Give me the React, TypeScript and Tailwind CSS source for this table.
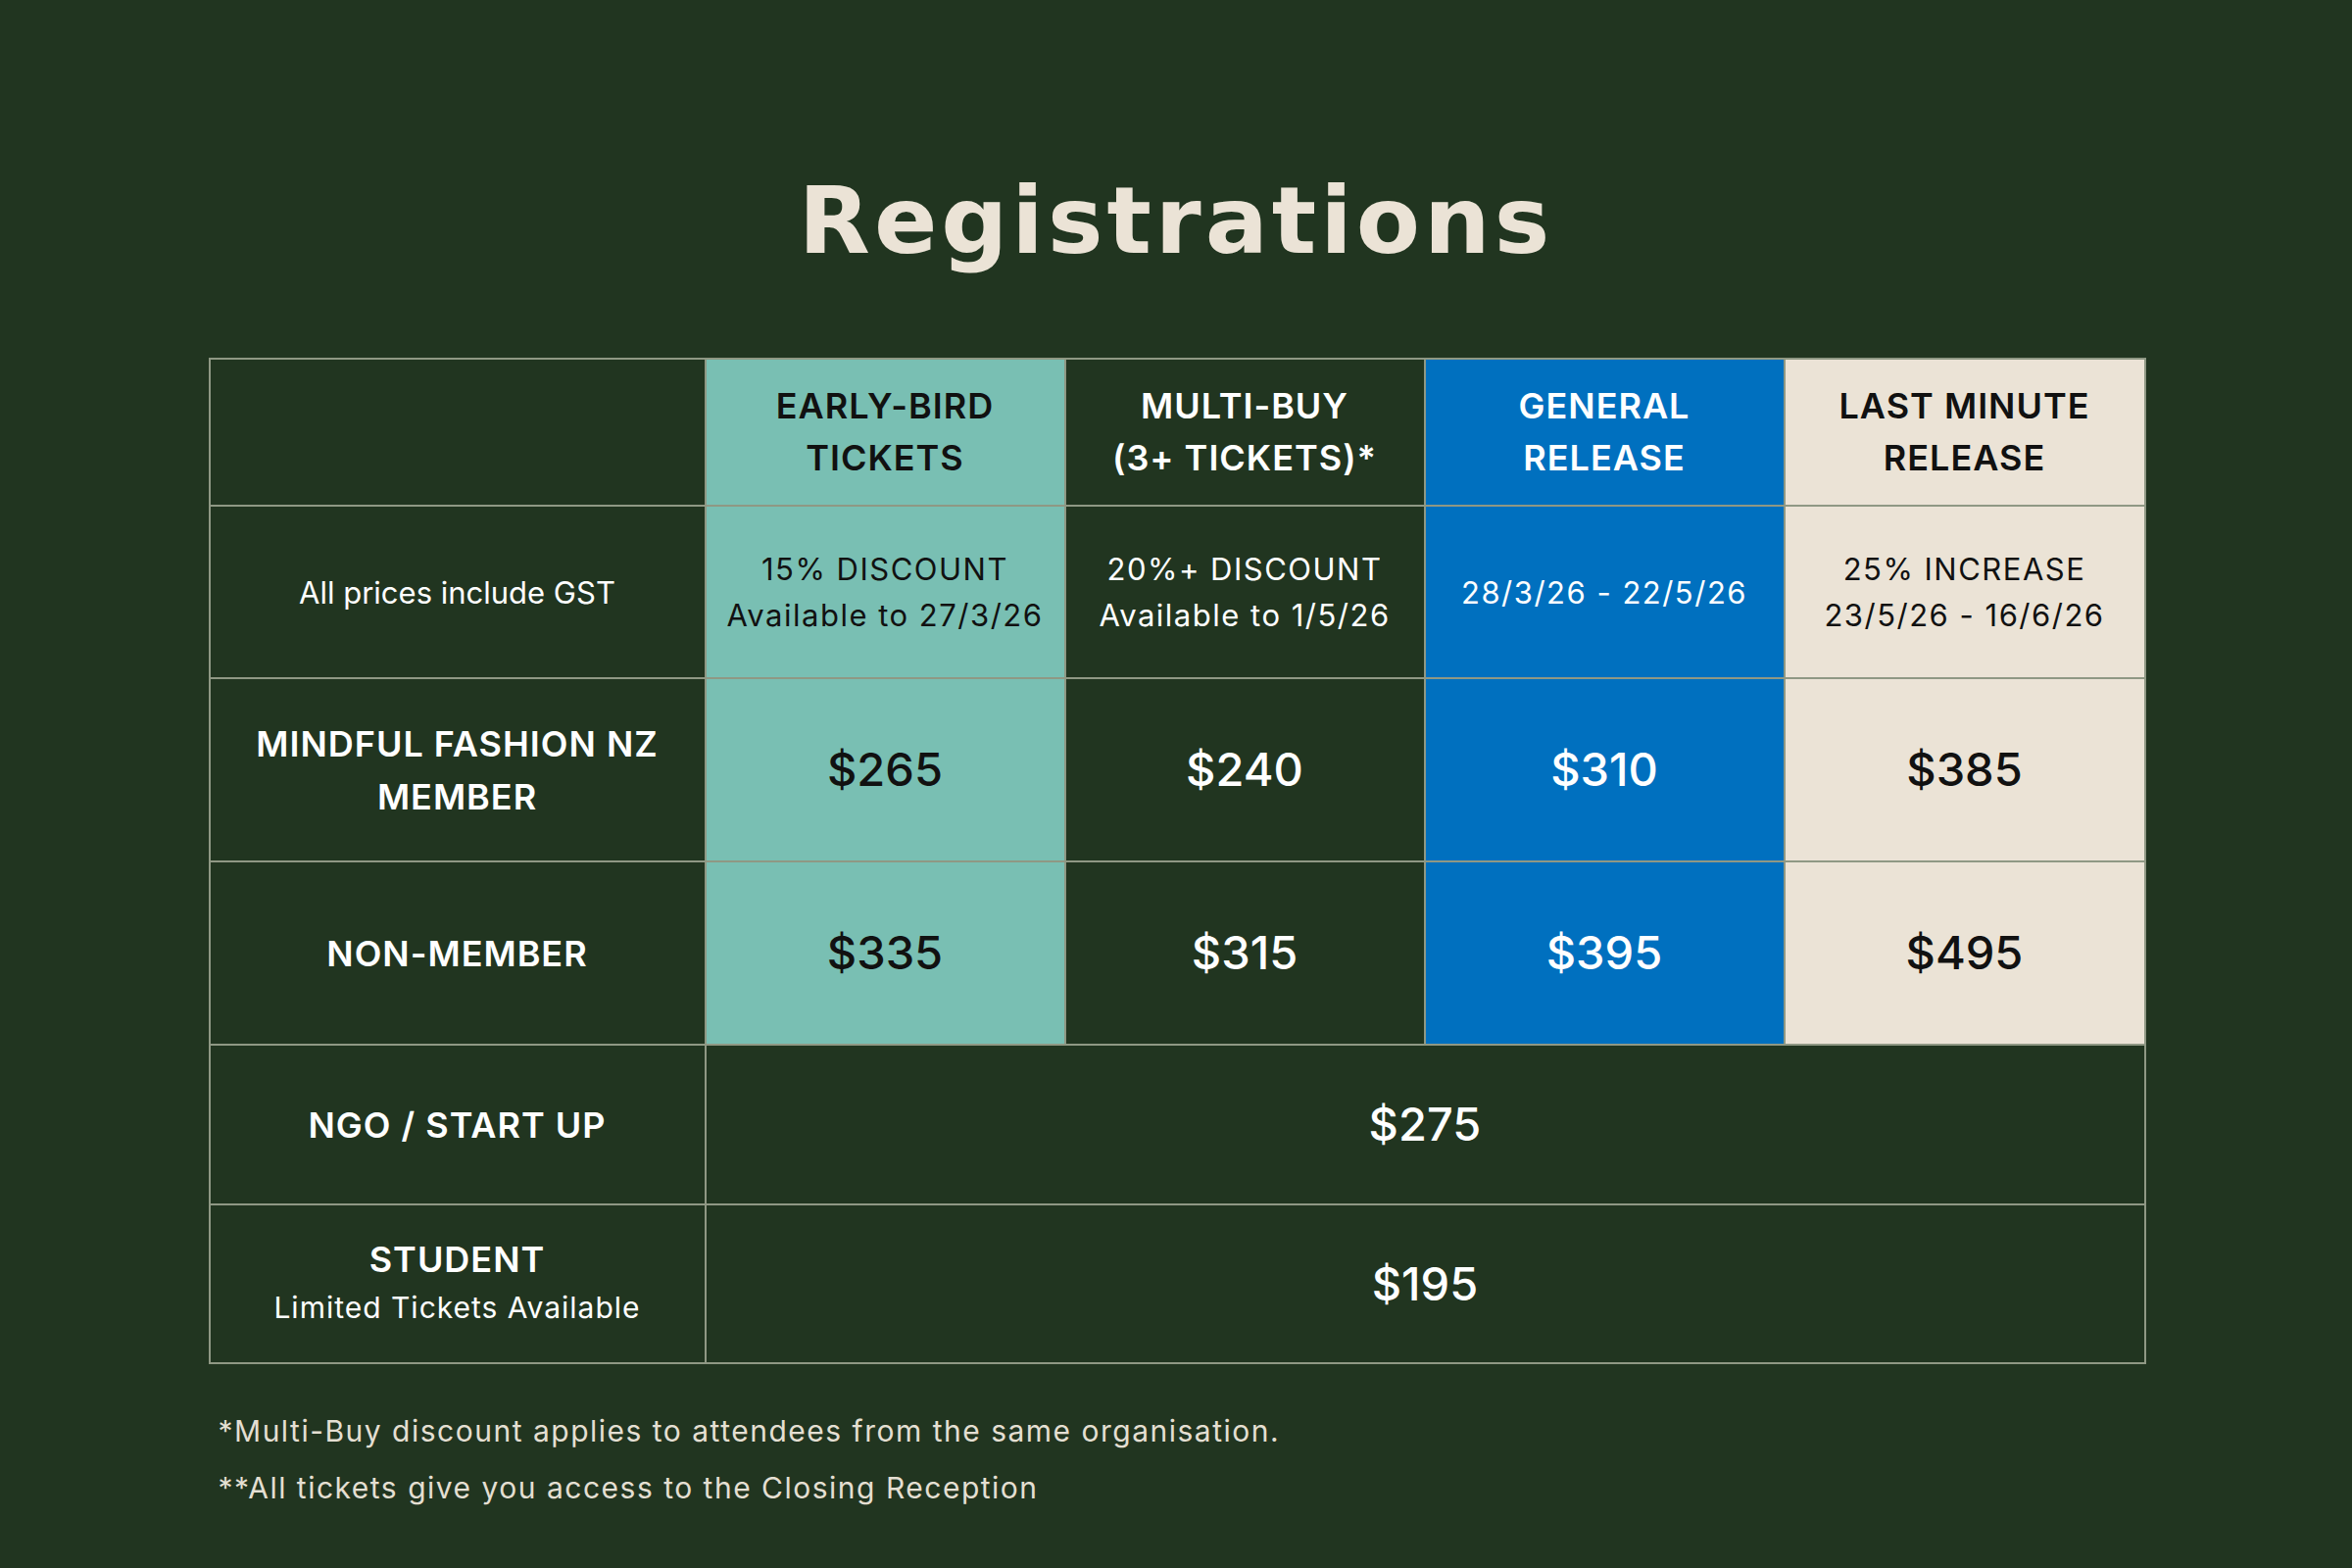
import React from "react";

const line = "border-2 border-[#8f9884]";

type Col = { head: string[]; sub: string[]; member: string; non: string; cell: string; text: string };

const cols: Col[] = [
  { head: ["EARLY-BIRD", "TICKETS"], sub: ["15% DISCOUNT", "Available to 27/3/26"], member: "$265", non: "$335", cell: "bg-[#79bfb3]", text: "text-[#111111]" },
  { head: ["MULTI-BUY", "(3+ TICKETS)*"], sub: ["20%+ DISCOUNT", "Available to 1/5/26"], member: "$240", non: "$315", cell: "bg-[#213520]", text: "text-white" },
  { head: ["GENERAL", "RELEASE"], sub: ["28/3/26 - 22/5/26"], member: "$310", non: "$395", cell: "bg-[#0070bf]", text: "text-white" },
  { head: ["LAST MINUTE", "RELEASE"], sub: ["25% INCREASE", "23/5/26 - 16/6/26"], member: "$385", non: "$495", cell: "bg-[#ebe3d6]", text: "text-[#111111]" },
];

function Lines({ items }: { items: string[] }) {
  return (
    <>
      {items.map((t) => (
        <div key={t}>{t}</div>
      ))}
    </>
  );
}

export default function App() {
  return (
    <div className="min-h-[1600px] w-[2400px] bg-[#213520] flex flex-col items-center font-['Inter','Liberation_Sans',sans-serif]">
      <h1 className="pt-[178px] text-[95px] leading-none font-bold tracking-[4px] text-[#ebe3d6] font-['DejaVu_Sans','Liberation_Sans',sans-serif]">
        Registrations
      </h1>

      <div className="mt-[92px] w-[1975px]">
        <table className="w-[1975px] table-fixed border-collapse text-center">
          <colgroup>
            <col className="w-[506px]" />
            <col className="w-[367px]" />
            <col className="w-[367px]" />
            <col className="w-[367px]" />
            <col className="w-[368px]" />
          </colgroup>
          <tbody>
            <tr className="h-[150px]">
              <td className={line} />
              {cols.map((c) => (
                <td key={c.head[0]} className={`${line} ${c.cell} ${c.text} text-[36px] leading-[53px] tracking-[1px] font-semibold`}>
                  <Lines items={c.head} />
                </td>
              ))}
            </tr>
            <tr className="h-[176px]">
              <td className={`${line} text-white text-[31px] leading-[47px]`}>All prices include GST</td>
              {cols.map((c) => (
                <td key={c.sub[0]} className={`${line} ${c.cell} ${c.text} text-[31px] leading-[47px] tracking-[1.5px]`}>
                  <Lines items={c.sub} />
                </td>
              ))}
            </tr>
            <tr className="h-[187px]">
              <td className={`${line} text-white text-[36px] leading-[54px] tracking-[1px] font-semibold`}>
                <div>MINDFUL FASHION NZ</div>
                <div>MEMBER</div>
              </td>
              {cols.map((c) => (
                <td key={c.member} className={`${line} ${c.cell} ${c.text} text-[47px] font-medium`}>
                  {c.member}
                </td>
              ))}
            </tr>
            <tr className="h-[187px]">
              <td className={`${line} text-white text-[36px] tracking-[1px] font-semibold`}>NON-MEMBER</td>
              {cols.map((c) => (
                <td key={c.non} className={`${line} ${c.cell} ${c.text} text-[47px] font-medium`}>
                  {c.non}
                </td>
              ))}
            </tr>
            <tr className="h-[163px]">
              <td className={`${line} text-white text-[36px] tracking-[1px] font-semibold`}>NGO / START UP</td>
              <td colSpan={4} className={`${line} text-white text-[47px] font-medium`}>$275</td>
            </tr>
            <tr className="h-[162px]">
              <td className={`${line} text-white`}>
                <div className="text-[36px] leading-[48px] tracking-[1px] font-semibold">STUDENT</div>
                <div className="text-[30px] leading-[50px] tracking-[1px]">Limited Tickets Available</div>
              </td>
              <td colSpan={4} className={`${line} text-white text-[47px] font-medium`}>$195</td>
            </tr>
          </tbody>
        </table>

        <div className="mt-[39px] pl-[10px] text-[30px] leading-[58px] tracking-[1.5px] text-[#e4dfd2]">
          <p>*Multi-Buy discount applies to attendees from the same organisation.</p>
          <p>**All tickets give you access to the Closing Reception</p>
        </div>
      </div>
    </div>
  );
}
